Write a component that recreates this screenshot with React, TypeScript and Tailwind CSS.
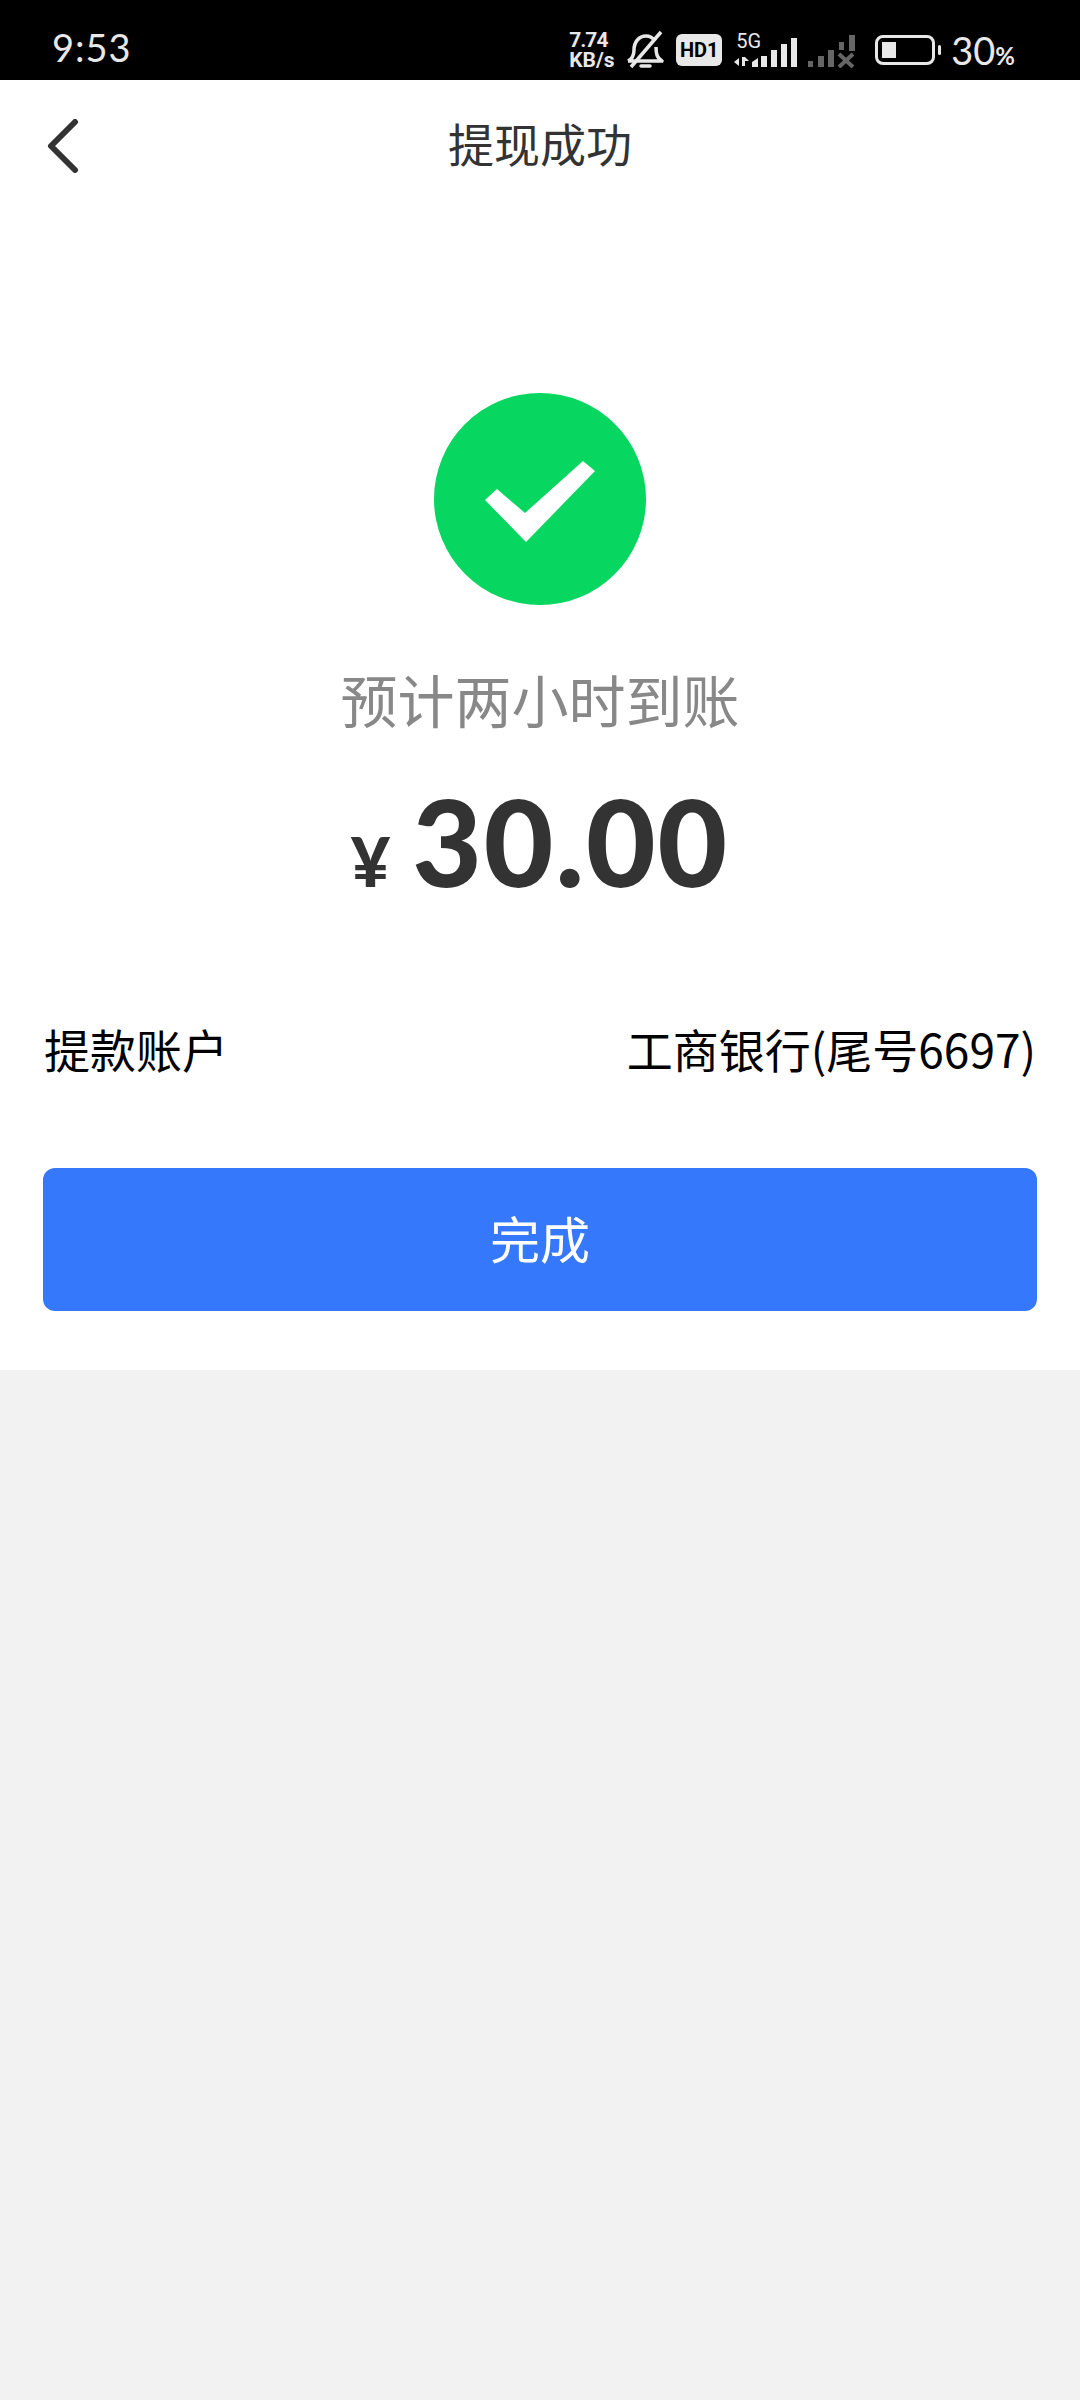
const cjk = 'font-["Noto_Sans_CJK_SC","Noto_Sans",sans-serif]'

const StatusBar = () => (
  <div className="h-[80px] bg-black flex items-center justify-between pl-[52px] pr-[65px] text-[#e8e8e8]">
    <span className="font-['Lato',sans-serif] text-[38px] leading-none tracking-[1px] mt-[14px]">9:53</span>
    <div className="flex items-center mt-[20px]">
      <div className="flex flex-col items-start font-['Roboto',sans-serif] font-bold text-[21px] leading-[20px] w-[48px]">
        <span className="tracking-[-1px]">7.74</span>
        <span>KB/s</span>
      </div>
      <svg width="40" height="40" viewBox="0 0 40 40" fill="none" stroke="#e8e8e8" strokeWidth="3.5" className="ml-[8px]">
        <path d="M3 31c4-2 6-5 6-11 0-8 5-14 12-14 4 0 7 2 9 5M31 17c0 7 1 11 6 14H3" strokeLinejoin="round" />
        <path d="M16 36h9" strokeLinecap="round" />
        <path d="M36 2 6 37" />
      </svg>
      <div className="ml-[11px] w-[46px] h-[32px] rounded-[6px] bg-[#e8e8e8] flex items-center justify-center text-black font-['Roboto',sans-serif] font-bold text-[20px] leading-none">HD1</div>
      <div className="ml-[11px] relative w-[66px] h-[36px]">
        <span className="absolute left-[3px] top-[-1px] font-['Roboto',sans-serif] text-[20px] leading-none">5G</span>
        <svg width="66" height="36" viewBox="0 0 66 36" fill="#e8e8e8" className="absolute left-0 top-0">
          <path d="M1 30l5-4v8zM9 25h3v9H9zM12 25l4 4-4 0z" />
          <path d="M21 30l6-4v9h-6zM30 24h6v11h-6zM40 18h6v17h-6zM50 12h6v23h-6zM60 6h6v29h-6z" transform="translate(-2 0)" />
        </svg>
      </div>
      <svg width="48" height="36" viewBox="0 0 48 36" fill="#666" className="ml-[8px]">
        <path d="M1 29h5v6H1zM11 24h6v11h-6zM21 18h6v17h-6zM32 10h5v8h-5zM42 3h6v16h-6z" />
        <path d="M32 22l14 13M46 22 32 35" stroke="#666" strokeWidth="4" />
      </svg>
      <div className="ml-[20px] w-[60px] h-[30px] rounded-[8px] border-[3px] border-[#e8e8e8] p-[4px]">
        <div className="w-[14px] h-full bg-[#e8e8e8]" />
      </div>
      <div className="ml-[3px] w-[3px] h-[10px] rounded-full bg-[#e8e8e8]" />
      <span className="ml-[10px] font-['Lato',sans-serif] text-[38px] leading-none">30<span className="text-[24px] font-bold">%</span></span>
    </div>
  </div>
)

export default function App() {
  return (
    <div className={`min-h-[2400px] bg-[#f2f2f2] ${cjk}`}>
      <StatusBar />
      <div className="bg-white h-[1290px] flex flex-col">
        <div className="h-[132px] relative flex items-center justify-center">
          <svg width="32" height="54" viewBox="0 0 32 54" fill="none" stroke="#333" strokeWidth="6" strokeLinecap="round" strokeLinejoin="round" className="absolute left-[47px] top-[39px]">
            <path d="M28 3 4 27l24 24" />
          </svg>
          <span className="text-[46px] leading-none text-[#333] mt-[-8px]">提现成功</span>
        </div>
        <div className="flex flex-col items-center pt-[181px]">
          <div className="w-[212px] h-[212px] rounded-full bg-[#07d660] flex items-center justify-center">
            <svg width="110" height="82" viewBox="0 0 110 82" fill="#fff" className="mt-[5px]">
              <path d="M12 28 40 52 98 0l12 10L41 81 0 39z" />
            </svg>
          </div>
          <div className="mt-[53px] text-[57px] leading-[80px] text-[#888]">预计两小时到账</div>
          <div className="mt-[28px] flex items-baseline text-[#333] font-['Lato',sans-serif] font-black h-[150px]">
            <span className="text-[68px] leading-none mr-[22px]">¥</span>
            <span className="text-[120px] leading-[150px] tracking-[2px]">30.00</span>
          </div>
        </div>
        <div className="mt-[102px] px-[44px] flex justify-between items-center text-black text-[46px] leading-[60px]">
          <span>提款账户</span>
          <span>工商银行(尾号6697)</span>
        </div>
        <button className="mt-[90px] mx-[43px] h-[143px] rounded-[12px] bg-[#3578fb] text-white text-[50px] leading-none pb-[6px] flex items-center justify-center">完成</button>
      </div>
    </div>
  )
}
